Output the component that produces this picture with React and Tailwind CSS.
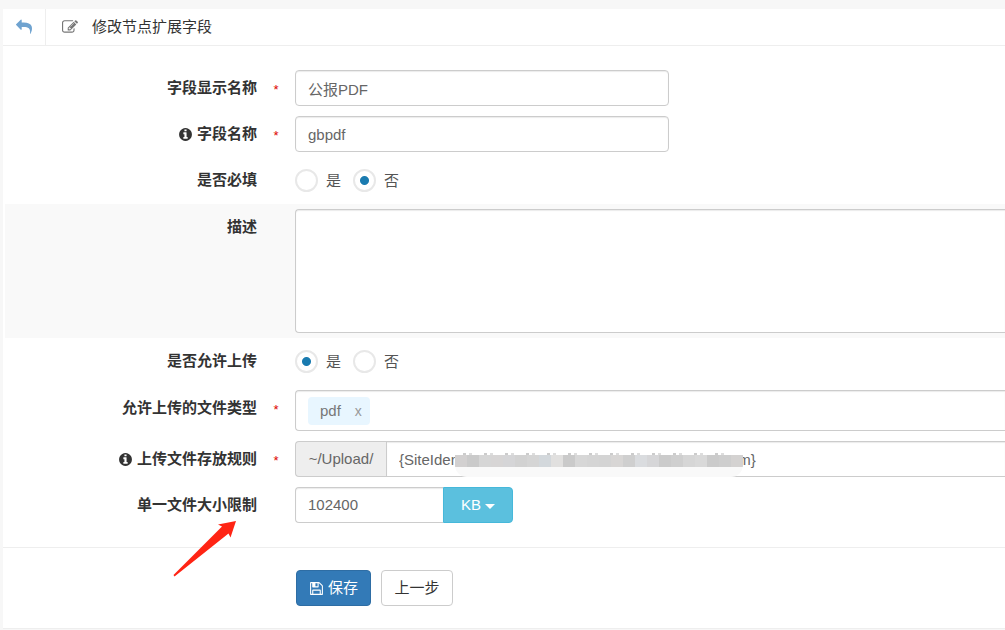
import { useState } from "react"

const Icon = ({ path, className }) => (
    <svg viewBox="0 0 1792 1792" fill="currentColor" className={className} aria-hidden="true">
        <path d={path} />
    </svg>
);

const icons = {
    reply: "M1792 1120q0 166-127 451-3 7-10.5 24t-13.5 30-13 22q-12 17-28 17-15 0-23.5-10t-8.5-25q0-9 2.5-26.5t2.5-23.5q5-68 5-123 0-101-17.5-181t-48.5-138.5-80-101-105.5-69.5-133-42.5-154-21.5-175.5-6h-224v256q0 26-19 45t-45 19-45-19l-512-512q-19-19-19-45t19-45l512-512q19-19 45-19t45 19 19 45v256h224q713 0 875 403 53 134 53 333z",
    edit: "M888 1184l116-116-152-152-116 116v56h96v96h56zm440-720q-16-16-33 1l-350 350q-17 17-1 33t33-1l350-350q17-17 1-33zm80 594v190q0 119-84.5 203.5t-203.5 84.5h-832q-119 0-203.5-84.5t-84.5-203.5v-832q0-119 84.5-203.5t203.5-84.5h832q63 0 117 25 15 7 18 23 3 17-9 29l-49 49q-14 14-32 8-23-6-45-6h-832q-66 0-113 47t-47 113v832q0 66 47 113t113 47h832q66 0 113-47t47-113v-126q0-13 9-22l64-64q15-15 35-7t20 29zm-96-738l288 288-672 672h-288v-288zm444 132l-92 92-288-288 92-92q28-28 68-28t68 28l152 152q28 28 28 68t-28 68z",
    info: "M1152 1376v-160q0-14-9-23t-23-9h-96v-512q0-14-9-23t-23-9h-320q-14 0-23 9t-9 23v160q0 14 9 23t23 9h96v320h-96q-14 0-23 9t-9 23v160q0 14 9 23t23 9h448q14 0 23-9t9-23zm-128-896v-160q0-14-9-23t-23-9h-192q-14 0-23 9t-9 23v160q0 14 9 23t23 9h192q14 0 23-9t9-23zm640 416q0 209-103 385.5t-279.5 279.5-385.5 103-385.5-103-279.5-279.5-103-385.5 103-385.5 279.5-279.5 385.5-103 385.5 103 279.5 279.5 103 385.5z",
    save: "M512 1536h768v-384h-768v384zm896 0h128v-896q0-14-10-38.5t-20-34.5l-281-281q-10-10-34-20t-39-10v416q0 40-28 68t-68 28h-576q-40 0-68-28t-28-68v-416h-128v1280h128v-416q0-40 28-68t68-28h832q40 0 68 28t28 68v416zm-384-928v-320q0-13-9.5-22.5t-22.5-9.5h-192q-13 0-22.5 9.5t-9.5 22.5v320q0 13 9.5 22.5t22.5 9.5h192q13 0 22.5-9.5t9.5-22.5zm640 32v928q0 40-28 68t-68 28h-1344q-40 0-68-28t-28-68v-1344q0-40 28-68t68-28h928q40 0 88 20t76 48l280 280q28 28 48 76t20 88z",
};

const control = "border border-[#ccc] bg-white px-3 text-[#666] shadow-[inset_0_1px_1px_rgba(0,0,0,0.08)] outline-none";

const FormRow = ({ label, htmlFor, id, info, required, shaded, children }) => {
    const Label = htmlFor ? "label" : "span";
    return (
        <div className={`flex items-start py-[5px] ${shaded ? "bg-[#f9f9f9]" : ""}`}>
            <Label htmlFor={htmlFor} id={id} className="flex h-9 w-[252px] shrink-0 items-center justify-end gap-1 font-bold text-[#333]">
                {info && <Icon path={icons.info} className="size-[15px]" />}
                {label}
            </Label>
            <span className="h-9 w-[38px] shrink-0 text-center text-[13px] leading-10 text-[#d00]">{required && "*"}</span>
            <div className="min-w-0 flex-1">{children}</div>
        </div>
    );
}

const YesNo = ({ name, labelledBy, initial }) => {
    const [value, setValue] = useState(initial);
    return (
        <div role="radiogroup" aria-labelledby={labelledBy} className="flex h-[37px] items-center gap-3">
            {["是", "否"].map((option) => (
                <label key={option} className="flex items-center gap-2 text-[#555]">
                    <input
                        type="radio"
                        name={name}
                        checked={value === option}
                        onChange={() => setValue(option)}
                        className="size-[23px] appearance-none rounded-full border-2 border-[#e8e8e8] bg-white checked:bg-[radial-gradient(circle,#1a7bb0_4px,transparent_5px)]"
                    />
                    {option}
                </label>
            ))}
        </div>
    );
}

const maskColors = [
    "bg-[#d2d0d0]", "bg-[#cacaca]", "bg-[#d6d6d6]", "bg-[#d7d5d5]", "bg-[#d5d5d7]", "bg-[#d2d2d2]",
    "bg-[#d5d5d5]", "bg-[#d3d8dc]", "bg-[#e1e0df]", "bg-[#cacaca]", "bg-[#d7d7d7]", "bg-[#d5d5d5]",
    "bg-[#d4d4d4]", "bg-[#d8d6d5]", "bg-[#cfcfcf]", "bg-[#dadcdf]", "bg-[#d6d6d8]", "bg-[#cbcbcb]",
    "bg-[#cfcfcf]", "bg-[#d6d6d6]", "bg-[#d9d9d9]", "bg-[#cbcbcb]", "bg-[#cecece]", "bg-[#d4d2d1]",
];

const App = () => {
    const [tags, setTags] = useState(["pdf"]);

    return (
        <div className="min-h-screen overflow-hidden bg-[#f7f7f7] pt-[9px] pl-[3px] font-['Liberation_Sans','Noto_Sans_CJK_SC',sans-serif] text-[15px] leading-5 text-[#333]">
            <div className="border-b border-[#eee] bg-white">
                <header className="flex h-[37px] items-stretch border-b border-[#eee]">
                    <button type="button" aria-label="返回" className="flex w-[43px] items-center justify-center border-r border-[#eee] text-[#6fa3d0]">
                        <Icon path={icons.reply} className="size-4" />
                    </button>
                    <h1 className="flex items-center gap-[14px] pl-4">
                        <Icon path={icons.edit} className="size-4 text-[#777]" />
                        修改节点扩展字段
                    </h1>
                </header>

                <form onSubmit={(e) => e.preventDefault()}>
                    <div className="pt-[19px] pb-[19px] pl-[2px]">
                        <FormRow label="字段显示名称" htmlFor="displayName" required>
                            <input id="displayName" defaultValue="公报PDF" className={`${control} h-9 w-full max-w-[374px] rounded`} />
                        </FormRow>
                        <FormRow label="字段名称" htmlFor="fieldName" info required>
                            <input id="fieldName" defaultValue="gbpdf" className={`${control} h-9 w-full max-w-[374px] rounded`} />
                        </FormRow>
                        <FormRow label="是否必填" id="requiredLabel">
                            <YesNo name="required" labelledBy="requiredLabel" initial="否" />
                        </FormRow>
                        <FormRow label="描述" htmlFor="description" shaded>
                            <textarea id="description" className={`${control} block h-[124px] w-full resize-none rounded-l border-r-0 py-2`} />
                        </FormRow>
                        <FormRow label="是否允许上传" id="uploadLabel">
                            <YesNo name="upload" labelledBy="uploadLabel" initial="是" />
                        </FormRow>
                        <FormRow label="允许上传的文件类型" id="typesLabel" required>
                            <div aria-labelledby="typesLabel" role="group" className={`${control} flex h-[41px] items-center gap-2 rounded-l border-r-0`}>
                                {tags.map((tag) => (
                                    <span key={tag} className="flex h-7 items-center gap-[14px] rounded bg-[#e8f6ff] pr-2 pl-3 text-[#777]">
                                        {tag}
                                        <button type="button" aria-label={`删除 ${tag}`} onClick={() => setTags(tags.filter((t) => t !== tag))} className="text-sm text-[#999]">x</button>
                                    </span>
                                ))}
                            </div>
                        </FormRow>
                        <FormRow label="上传文件存放规则" htmlFor="uploadRule" info required>
                            <div className="flex h-9">
                                <span className="flex w-[91px] shrink-0 items-center justify-center rounded-l border border-r-0 border-[#ccc] bg-[#eee] text-[#666]">~/Upload/</span>
                                <div className="relative min-w-0 flex-1">
                                    <input id="uploadRule" defaultValue={`{SiteIden${" ".repeat(67)}m}`} className={`${control} h-9 w-full border-r-0`} />
                                    {/* hides the middle of the path */}
                                    <div className="absolute top-3 left-[69px] w-[288px]">
                                        <div className="mx-2 h-[2px] bg-[repeating-linear-gradient(90deg,#ccc_0_3px,#fff_3px_6px,#ddd_6px_9px,#fff_9px_21px)]"></div>
                                        <div className="flex h-[22px] items-start overflow-hidden rounded-b-xl bg-[#f9f9f9]">
                                            {maskColors.map((color, i) => (
                                                <span key={i} className={`h-3 w-3 ${color}`} />
                                            ))}
                                        </div>
                                    </div>
                                </div>
                            </div>
                        </FormRow>
                        <FormRow label="单一文件大小限制" htmlFor="sizeLimit">
                            <div className="flex h-9">
                                <input id="sizeLimit" defaultValue="102400" className={`${control} w-[148px] rounded-l border-r-0`} />
                                <button type="button" className="flex w-[70px] items-center justify-center gap-1 rounded-r border border-[#46b8da] bg-[#5bc0de] text-white">
                                    KB
                                    <span className="mt-[2px] border-x-[5px] border-t-[5px] border-x-transparent border-t-white"></span>
                                </button>
                            </div>
                            {/* pointer to the size limit */}
                            <div className="relative">
                                <svg viewBox="0 0 64 58" className="absolute -top-1 -left-[122px] h-[58px] w-16" fill="#ff2414" aria-hidden="true">
                                    <path d="M0.5 56L1.5 57.5L55.500 14.5L57.500 18.500L63 2L45 5.500L49 7.500Z" />
                                </svg>
                            </div>
                        </FormRow>
                    </div>

                    <div className="flex gap-[10px] border-t border-[#eee] pt-[22px] pb-[22px] pl-[293px]">
                        <button type="submit" className="flex h-9 w-[75px] items-center justify-center gap-1 rounded border border-[#2e6da4] bg-[#337ab7] text-white">
                            <Icon path={icons.save} className="size-[15px]" />
                            保存
                        </button>
                        <button type="button" className="h-9 w-[72px] rounded border border-[#ccc] bg-white">上一步</button>
                    </div>
                </form>
            </div>
        </div>
    );
}

export default App;
